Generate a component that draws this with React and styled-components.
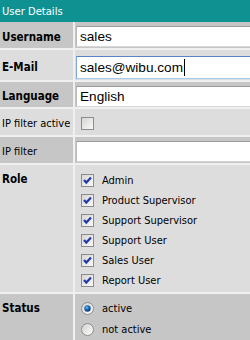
import React from 'react';
import styled, { createGlobalStyle } from 'styled-components';

const Global = createGlobalStyle`
  html, body { margin: 0; padding: 0; background: #ffffff; overflow: hidden; }
  body { font-family: "Liberation Sans", Arial, sans-serif; color: #000; }
`;

const condensed = `"DejaVu Sans Condensed", "DejaVu Sans", sans-serif`;

const Panel = styled.div`
  width: 258px;
  height: 340px;
  display: flex;
  flex-direction: column;
  background: #f0f0f0;
`;

const Header = styled.div`
  height: 22px;
  flex: none;
  background: #0f9191;
  color: #ffffff;
  font: 10px "DejaVu Sans", sans-serif;
  display: flex;
  align-items: center;
  padding-left: 2px;
`;

const Rows = styled.div`
  display: flex;
  flex-direction: column;
  gap: 2px;
  flex: 1;
`;

const Row = styled.div`
  display: grid;
  grid-template-columns: 73px 1fr;
  column-gap: 2px;
  height: ${(p) => (p.$h ? `${p.$h}px` : 'auto')};
  flex: ${(p) => (p.$h ? 'none' : '1')};
`;

const tone = (p) => (p.$dark ? '#c6c6c6' : '#dddddd');

const Label = styled.div`
  background: ${tone};
  display: flex;
  align-items: ${(p) => (p.$top ? 'flex-start' : 'center')};
  padding: ${(p) => (p.$top ? '7px 0 0 2px' : '3px 0 0 2px')};
  font-family: ${condensed};
  font-stretch: condensed;
  font-size: ${(p) => (p.$strong ? '11.5px' : '11px')};
  font-weight: ${(p) => (p.$bold ? 'bold' : 'normal')};
  line-height: 14px;
  white-space: nowrap;
  overflow: hidden;
`;

const Value = styled.div`
  background: ${tone};
  display: flex;
  flex-direction: column;
  padding: ${(p) => p.$pad || '0 0 0 6px'};
  overflow: hidden;
`;

const Field = styled.div`
  height: ${(p) => p.$h || 21}px;
  box-sizing: border-box;
  background: #ffffff;
  border: 1px solid ${(p) => (p.$focus ? '#7fa6d9' : '#b9b9b9')};
  border-top-color: ${(p) => (p.$focus ? '#5a83c4' : '#9c9c9c')};
  border-bottom-color: ${(p) => (p.$focus ? '#a9cbeb' : '#d6d6d6')};
  margin-left: -5px;
  display: flex;
  align-items: center;
  padding-left: 3px;
  font-family: "Liberation Sans", Arial, sans-serif;
  font-size: 13.6px;
  white-space: nowrap;
`;

const Caret = styled.span`
  display: inline-block;
  width: 1px;
  height: 17px;
  background: #000;
  margin-left: 1px;
`;

const Option = styled.div`
  height: ${(p) => p.$h || 20}px;
  display: flex;
  align-items: center;
  gap: 8px;
  font-family: ${condensed};
  font-stretch: condensed;
  font-size: 11px;
  white-space: nowrap;
`;

const Box = styled.svg`
  width: 13px;
  height: 13px;
  flex: none;
`;

function CheckBox({ checked }) {
  const id = checked ? 'cbOn' : 'cbOff';
  return (
    <Box viewBox="0 0 13 13">
      <defs>
        <linearGradient id={id} x1="0" y1="0" x2="1" y2="1">
          <stop offset="0" stopColor="#d4d4d0" />
          <stop offset="1" stopColor="#fbfbfb" />
        </linearGradient>
      </defs>
      <rect x="0.5" y="0.5" width="12" height="12" fill={`url(#${id})`} stroke="#8c8c8c" />
      {checked && (
        <path d="M3 6 L5.3 8.6 L10 3.4" fill="none" stroke="#2438a8" strokeWidth="2.2" />
      )}
    </Box>
  );
}

function Radio({ checked }) {
  const id = checked ? 'rdOn' : 'rdOff';
  return (
    <Box viewBox="0 0 13 13">
      <defs>
        <linearGradient id={id} x1="0" y1="0" x2="1" y2="1">
          <stop offset="0" stopColor="#d0d0cc" />
          <stop offset="1" stopColor="#ffffff" />
        </linearGradient>
        <radialGradient id="rdDot" cx="0.4" cy="0.35" r="0.6">
          <stop offset="0" stopColor="#6fc6ff" />
          <stop offset="0.5" stopColor="#1a6fc0" />
          <stop offset="1" stopColor="#0b3a7a" />
        </radialGradient>
      </defs>
      <circle cx="6.5" cy="6.5" r="6" fill={`url(#${id})`} stroke="#8c8c8c" />
      {checked && <circle cx="6.5" cy="6.5" r="3.2" fill="url(#rdDot)" />}
    </Box>
  );
}

const roles = ['Admin', 'Product Supervisor', 'Support Supervisor', 'Support User', 'Sales User', 'Report User'];

export default function App() {
  return (
    <>
      <Global />
      <Panel>
        <Header>User Details</Header>
        <Rows>
          <Row $h={26}>
            <Label $dark $strong $bold>Username</Label>
            <Value $dark $pad="4px 0 0 6px"><Field>sales</Field></Value>
          </Row>
          <Row $h={30}>
            <Label $strong $bold>E-Mail</Label>
            <Value $pad="6px 0 0 6px">
              <Field $h={23} $focus>sales@wibu.com<Caret /></Field>
            </Value>
          </Row>
          <Row $h={25}>
            <Label $dark $strong $bold>Language</Label>
            <Value $dark $pad="4px 0 0 6px"><Field>English</Field></Value>
          </Row>
          <Row $h={26}>
            <Label>IP filter active</Label>
            <Value $pad="8px 0 0 6px"><CheckBox /></Value>
          </Row>
          <Row $h={26}>
            <Label $dark>IP filter</Label>
            <Value $dark $pad="4px 0 0 6px"><Field /></Value>
          </Row>
          <Row $h={127}>
            <Label $top $strong $bold>Role</Label>
            <Value $pad="5px 0 0 6px">
              {roles.map((r) => (
                <Option key={r}><CheckBox checked />{r}</Option>
              ))}
            </Value>
          </Row>
          <Row>
            <Label $dark $top $strong $bold>Status</Label>
            <Value $dark $pad="4px 0 0 6px">
              <Option $h={21}><Radio checked />active</Option>
              <Option $h={21}><Radio />not active</Option>
            </Value>
          </Row>
        </Rows>
      </Panel>
    </>
  );
}
